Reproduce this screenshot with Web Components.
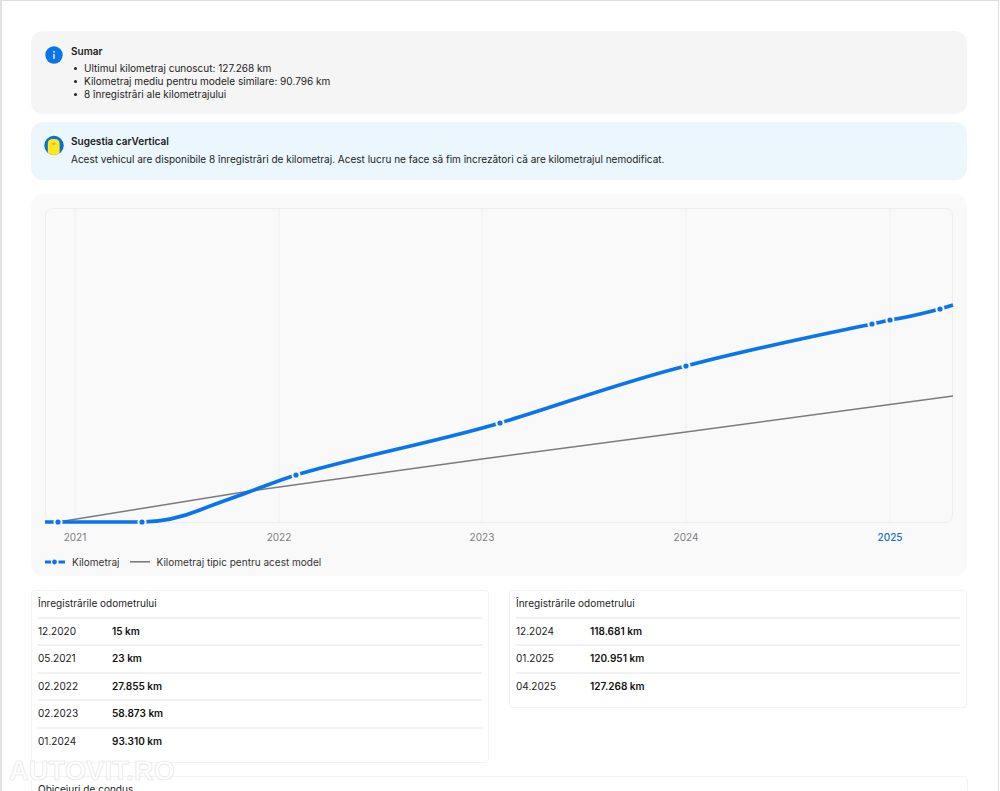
<!DOCTYPE html>
<html><head><meta charset="utf-8"><style>
html,body{margin:0;padding:0;background:#fff;overflow:hidden;height:791px}
body{font-family:Inter,"Liberation Sans",sans-serif;color:#1a1a1a}
</style></head><body>
<report-page>
  <info-card kind="info" title="Sumar">
    <ul-list><li-item>Ultimul kilometraj cunoscut: 127.268 km</li-item><li-item>Kilometraj mediu pentru modele similare: 90.796 km</li-item><li-item>8 înregistrări ale kilometrajului</li-item></ul-list>
  </info-card>
  <info-card kind="tip" title="Sugestia carVertical">Acest vehicul are disponibile 8 înregistrări de kilometraj. Acest lucru ne face să fim încrezători că are kilometrajul nemodificat.</info-card>
  <odo-chart></odo-chart>
  <div style="display:grid;grid-template-columns:458px 458px;gap:20px;align-items:start;margin-top:14px">
    <odo-table rows="12.2020|15 km;05.2021|23 km;02.2022|27.855 km;02.2023|58.873 km;01.2024|93.310 km" heading="Înregistrările odometrului"></odo-table>
    <odo-table rows="12.2024|118.681 km;01.2025|120.951 km;04.2025|127.268 km" heading="Înregistrările odometrului"></odo-table>
  </div>
  <odo-table style="margin-top:13px" heading="Obiceiuri de condus" rows=""></odo-table>
  <water-mark></water-mark>
</report-page>
<script>
function el(name,html){customElements.define(name,class extends HTMLElement{connectedCallback(){if(this.shadowRoot)return;const s=this.attachShadow({mode:'open'});s.innerHTML=typeof html==='function'?html(this):html;}});}
el('report-page',`<style>:host{display:block;box-sizing:border-box;width:999px;height:900px;border:1px solid #dedede;border-left:2px solid #e2e2e2;padding:30px 30px 0 29px}</style><slot></slot>`);
el('ul-list',`<style>:host{display:block;margin-top:5px}</style><slot></slot>`);
el('li-item',`<style>:host{display:flex;font-size:10.04px;line-height:13.2px;color:#222}i{width:3px;height:3px;border-radius:50%;background:#222;margin:5px 7px 0 3px;flex:none;}b{font-weight:400}</style><i></i><b><slot></slot></b>`);
const infoIcon=`<svg width="18" height="18" viewBox="0 0 18 18" style="margin:6px 0 0 0"><circle cx="9" cy="9" r="8.7" fill="#0a74eb"/><rect x="8.3" y="8" width="1.4" height="5" rx=".4" fill="#fff"/><circle cx="9" cy="5.8" r=".9" fill="#fff"/></svg>`;
const tipIcon=`<svg width="21" height="21" viewBox="0 0 21 21" style="margin:5px 0 0 -1px"><defs><clipPath id="c"><circle cx="10.5" cy="10.5" r="10.2"/></clipPath></defs><circle cx="10.5" cy="10.5" r="10.2" fill="#0a6fd8"/><path clip-path="url(#c)" d="M4 21V8.5C4 5 6 3.6 10 3.6h1c3.6 0 5.4 1.6 5.4 5V21z" fill="#ffe81f"/><rect x="9" y="8.4" width="3" height=".9" fill="#8a7a10"/></svg>`;
el('info-card',h=>{const tip=h.getAttribute('kind')==='tip';return `<style>:host{display:flex;gap:7px;box-sizing:border-box;width:936px;border-radius:12px;padding:${tip?'9px':'10px'} 14px 0;height:${tip?58:83}px;margin-bottom:${tip?14:8}px;background:${tip?'#ebf7fd':'#f5f5f5'}}
.ic{width:19px;flex:none;display:flex;justify-content:flex-start;margin-top:-1px}
.t{font-size:10.04px;font-weight:600;line-height:20px;height:20px;color:#1a1a1a}
.b{font-size:${tip?'10':'10.04'}px;line-height:13px;color:#222;${tip?'margin-top:2px;':'margin-top:-4px;'}}
</style><div class="ic">${tip?tipIcon:infoIcon}</div><div><div class="t">${h.getAttribute('title')}</div><div class="b"><slot></slot></div></div>`});
el('odo-chart',()=>{
 const pts=[[58,522],[142,522],[296,475],[500,423],[686,366],[872,324],[890,320],[940,309]];
 const ox=45,oy=208;
 const T=(x,y)=>`${x-ox},${y-oy}`;
 const curve=`M${T(45,522)} L${T(142,522)} C${T(165,522)} ${T(185,516)} ${T(200,510)} C${T(217,503)} ${T(233,498)} ${T(250,491.5)} C${T(265,486)} ${T(280,480)} ${T(296,475)} C${T(360,456)} ${T(440,441)} ${T(500,423)} C${T(560,405)} ${T(625,381)} ${T(686,366)} C${T(750,349)} ${T(810,337)} ${T(872,324)} L${T(890,320)} C${T(910,317)} ${T(925,313)} ${T(940,309)} L${T(953,305)}`;
 const grid=[75,279,482,686,890].map(x=>`<line x1="${x-ox}" x2="${x-ox}" y1="0" y2="314" stroke="#f0f0f0" stroke-width="1"/>`).join('');
 const dots=pts.map(p=>{const[a,b]=T(p[0],p[1]).split(',');return `<circle cx="${a}" cy="${b}" r="4.6" fill="#f9f9f9"/><circle cx="${a}" cy="${b}" r="2.6" fill="#0a74eb"/>`}).join('');
 const gray=[[58,522],[250,491],[482,459],[686,432],[953,396]].map(p=>T(p[0],p[1])).join(' ');
 return `<style>:host{display:block;box-sizing:border-box;width:936px;height:382px;background:#f9f9f9;border-radius:12px;padding:14px 14px 0}
 .plot{box-sizing:border-box;width:908px;height:315px;border:1px solid #eeeeee;border-radius:7px;position:relative;overflow:visible}
 svg.p{position:absolute;left:-1px;top:-1px;overflow:visible}
 .ax{position:relative;height:29px;font-size:10.04px;color:#7d7d7d}
 .ax span{position:absolute;top:8px;transform:translateX(-50%);line-height:13px}
 .ax .cur{color:#1273c4;font-weight:500}
 .lg{display:flex;align-items:center;font-size:10.04px;color:#333;height:17px;margin-top:1px}
 .lg svg{flex:none;margin-right:7px}.lg span{margin-right:10px}
 </style><div class="plot"><svg class="p" width="908" height="315" viewBox="0 0 908 315">${grid}<polyline points="${gray}" fill="none" stroke="#7b7b7b" stroke-width="1.5"/><path d="${curve}" fill="none" stroke="#0a74eb" stroke-width="3.6"/>${dots}</svg></div>
 <div class="ax"><span style="left:30px">2021</span><span style="left:234px">2022</span><span style="left:437px">2023</span><span style="left:641px">2024</span><span class="cur" style="left:845px">2025</span></div>
 <div class="lg"><svg width="20" height="6" viewBox="0 0 20 6"><rect x="0" y="1.5" width="6" height="3" fill="#0a74eb"/><circle cx="9.5" cy="3" r="2.4" fill="#0a74eb"/><rect x="13.5" y="1.5" width="6.5" height="3" fill="#0a74eb"/></svg><span>Kilometraj</span><svg width="20" height="2" viewBox="0 0 20 2"><rect width="20" height="1.6" fill="#7b7b7b"/></svg><span>Kilometraj tipic pentru acest model</span></div>`});
el('odo-table',h=>{const rows=(h.getAttribute('rows')||'').split(';').filter(Boolean).map(r=>{const[a,b]=r.split('|');return `<div class="r"><span class="d">${a}</span><span class="v">${b}</span></div>`}).join('');
 return `<style>:host{display:block;box-sizing:border-box;border:1px solid #f3f3f3;border-radius:4px;padding:0 6px;background:#fff;color:#222;font-size:10.04px}
 .h{height:25.7px;line-height:25px;border-bottom:2px solid #f1f1f1}
 .r{display:flex;height:25.5px;line-height:25px;border-bottom:2px solid #f1f1f1}
 .r:last-child{border-bottom:0;height:33.3px}
 .d{width:74px}.v{font-weight:600;color:#111}
 </style><div class="h">${h.getAttribute('heading')}</div>${rows}`});
el('water-mark',`<style>:host{position:absolute;left:9px;top:756px;font:700 27px/30px "Liberation Sans",sans-serif;color:rgba(255,255,255,.9);-webkit-text-stroke:.6px #e2e2e2;letter-spacing:.3px}</style>AUTOVIT.RO`);
</script>
</body></html>
